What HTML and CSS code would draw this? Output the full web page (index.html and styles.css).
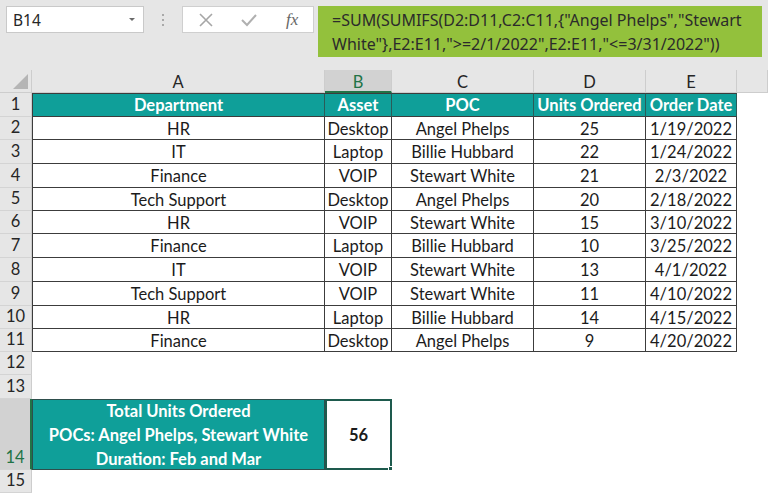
FILE: index.html
```html
<!DOCTYPE html>
<html lang="en">

<head>
    <meta charset="UTF-8">
    <title>SUMIFS with multiple criteria</title>
    <link rel="stylesheet" href="styles.css">
</head>

<body>
    <div class="topbar">
        <div class="namebox">
            <span>B14</span>
            <span class="caret"></span>
        </div>
        <div class="grip">
            <i></i><i></i><i></i>
        </div>
        <div class="buttons">
            <svg width="16" height="16" viewBox="0 0 16 16">
                <path d="M2 2 L14 14 M14 2 L2 14" stroke="#a6a6a6" stroke-width="1.6" fill="none" />
            </svg>
            <svg width="18" height="16" viewBox="0 0 18 16">
                <path d="M2 8 L7 13 L16 3" stroke="#b0b0b0" stroke-width="2" fill="none" />
            </svg>
            <span class="fx">fx</span>
        </div>
        <div class="formula">=SUM(SUMIFS(D2:D11,C2:C11,{"Angel Phelps","Stewart White"},E2:E11,"&gt;=2/1/2022",E2:E11,"&lt;=3/31/2022"))</div>
    </div>

    <div class="sheet">
        <!-- column headers -->
        <div class="corner"><span class="tri"></span></div>
        <div class="colh">A</div>
        <div class="colh sel">B</div>
        <div class="colh">C</div>
        <div class="colh">D</div>
        <div class="colh">E</div>
        <div class="colh"></div>

        <!-- row 1 -->
        <div class="rowh">1</div>
        <div class="c head first">Department</div>
        <div class="c head">Asset</div>
        <div class="c head">POC</div>
        <div class="c head">Units Ordered</div>
        <div class="c head">Order Date</div>
        <div class="e"></div>

        <div class="rowh">2</div>
        <div class="c first">HR</div>
        <div class="c">Desktop</div>
        <div class="c">Angel Phelps</div>
        <div class="c">25</div>
        <div class="c">1/19/2022</div>
        <div class="e"></div>

        <div class="rowh">3</div>
        <div class="c first">IT</div>
        <div class="c">Laptop</div>
        <div class="c">Billie Hubbard</div>
        <div class="c">22</div>
        <div class="c">1/24/2022</div>
        <div class="e"></div>

        <div class="rowh">4</div>
        <div class="c first">Finance</div>
        <div class="c">VOIP</div>
        <div class="c">Stewart White</div>
        <div class="c">21</div>
        <div class="c">2/3/2022</div>
        <div class="e"></div>

        <div class="rowh">5</div>
        <div class="c first">Tech Support</div>
        <div class="c">Desktop</div>
        <div class="c">Angel Phelps</div>
        <div class="c">20</div>
        <div class="c">2/18/2022</div>
        <div class="e"></div>

        <div class="rowh">6</div>
        <div class="c first">HR</div>
        <div class="c">VOIP</div>
        <div class="c">Stewart White</div>
        <div class="c">15</div>
        <div class="c">3/10/2022</div>
        <div class="e"></div>

        <div class="rowh">7</div>
        <div class="c first">Finance</div>
        <div class="c">Laptop</div>
        <div class="c">Billie Hubbard</div>
        <div class="c">10</div>
        <div class="c">3/25/2022</div>
        <div class="e"></div>

        <div class="rowh">8</div>
        <div class="c first">IT</div>
        <div class="c">VOIP</div>
        <div class="c">Stewart White</div>
        <div class="c">13</div>
        <div class="c">4/1/2022</div>
        <div class="e"></div>

        <div class="rowh">9</div>
        <div class="c first">Tech Support</div>
        <div class="c">VOIP</div>
        <div class="c">Stewart White</div>
        <div class="c">11</div>
        <div class="c">4/10/2022</div>
        <div class="e"></div>

        <div class="rowh">10</div>
        <div class="c first">HR</div>
        <div class="c">Laptop</div>
        <div class="c">Billie Hubbard</div>
        <div class="c">14</div>
        <div class="c">4/15/2022</div>
        <div class="e"></div>

        <div class="rowh">11</div>
        <div class="c first">Finance</div>
        <div class="c">Desktop</div>
        <div class="c">Angel Phelps</div>
        <div class="c">9</div>
        <div class="c">4/20/2022</div>
        <div class="e"></div>

        <div class="rowh">12</div>
        <div class="blank"></div>

        <div class="rowh">13</div>
        <div class="blank"></div>

        <div class="rowh sel">14</div>
        <div class="total">Total Units Ordered<br>POCs: Angel Phelps, Stewart White<br>Duration: Feb and Mar</div>
        <div class="result">56<span class="handle"></span></div>
        <div class="rest"></div>

        <div class="rowh">15</div>
        <div class="blank"></div>
    </div>
</body>

</html>
```

FILE: styles.css
```css
* {
    margin: 0;
    padding: 0;
    box-sizing: border-box;
}

body {
    width: 768px;
    height: 493px;
    overflow: hidden;
    background: #fff;
    font-family: "Lato", "Liberation Sans", sans-serif;
    color: #1b1b1b;
}

/* formula bar area */
.topbar {
    height: 70px;
    background: #e6e6e6;
    display: flex;
    align-items: flex-start;
    padding: 6px 6px 0 6px;
}

.namebox {
    width: 138px;
    height: 27px;
    background: #fff;
    border: 1px solid #c9c9c9;
    display: flex;
    align-items: center;
    justify-content: space-between;
    padding: 0 8px 0 6px;
    font-family: "Noto Sans", sans-serif;
    font-size: 15.5px;
    color: #262626;
}

.caret {
    width: 0;
    height: 0;
    border-left: 3px solid transparent;
    border-right: 3px solid transparent;
    border-top: 3px solid #6a6a6a;
}

.grip {
    width: 38px;
    height: 27px;
    display: flex;
    flex-direction: column;
    align-items: center;
    justify-content: center;
    gap: 3px;
}

.grip i {
    width: 2px;
    height: 2px;
    background: #a9a9a9;
}

.buttons {
    width: 132px;
    height: 27px;
    background: #fff;
    border: 1px solid #cfcfcf;
    display: flex;
    align-items: center;
    padding: 0 0 0 15px;
    gap: 26px;
}

.fx {
    font-family: "Liberation Serif", serif;
    font-style: italic;
    font-size: 17px;
    color: #666;
    margin-left: 2px;
}

.formula {
    width: 444px;
    height: 51px;
    margin-left: 4px;
    background: #93c13c;
    padding: 2px 8px 0 14px;
    font-family: "Noto Sans", sans-serif;
    font-size: 16px;
    line-height: 24px;
    color: #2b2b2b;
}

/* worksheet grid */
.sheet {
    display: grid;
    grid-template-columns: 32px 293px 67px 142px 112px 91px 31px;
    grid-template-rows: 23px 24px 23px 24px 24px 23px 23px 24px 24px 24px 23px 23px 23px 24px 71px 23px;
    font-size: 16.5px;
}

.corner {
    background: #e6e6e6;
    border-right: 1px solid #cdcdcd;
    border-bottom: 1px solid #cdcdcd;
    position: relative;
}

.tri {
    position: absolute;
    right: 3px;
    bottom: 3px;
    width: 0;
    height: 0;
    border-left: 15px solid transparent;
    border-bottom: 15px solid #b5b5b5;
}

.colh {
    background: #e6e6e6;
    border-right: 1px solid #cdcdcd;
    border-bottom: 1px solid #cdcdcd;
    text-align: center;
    line-height: 25px;
    color: #262626;
}

.colh.sel {
    background: #d2d2d2;
    color: #217346;
    border-bottom: 2px solid #217346;
}

.rowh {
    background: #e6e6e6;
    border-right: 1px solid #cdcdcd;
    border-bottom: 1px solid #d4d4d4;
    text-align: center;
    line-height: 23px;
    color: #262626;
    display: flex;
    align-items: flex-end;
    justify-content: center;
    padding-bottom: 0;
}

.rowh.sel {
    background: #d2d2d2;
    color: #217346;
    border-right: 2px solid #217346;
}

.c {
    border-right: 1px solid #3c3c3c;
    border-bottom: 1px solid #3c3c3c;
    text-align: center;
    line-height: 23px;
    padding-top: 1px;
    white-space: nowrap;
}

.c.first {
    border-left: 1px solid #3c3c3c;
}

.c.head {
    background: #0f9f99;
    color: #fff;
    font-weight: bold;
    border-top: 1px solid #3c3c3c;
    border-right-color: #2a5b58;
    padding-top: 0;
}

.e {
    background: #fff;
}

.blank {
    grid-column: 2 / span 6;
}

.total {
    background: #0f9f99;
    color: #fff;
    font-weight: bold;
    text-align: center;
    line-height: 24px;
    border: 1px solid #2e4e4c;
    display: flex;
    align-items: center;
    justify-content: center;
    padding-top: 1px;
}

.result {
    border: 2px solid #1e5a4d;
    display: flex;
    align-items: center;
    justify-content: center;
    font-weight: bold;
    position: relative;
}

.handle {
    position: absolute;
    right: -3px;
    bottom: -3px;
    width: 5px;
    height: 5px;
    background: #1e5a4d;
    border: 1px solid #fff;
}

.rest {
    grid-column: 4 / span 4;
}
```
